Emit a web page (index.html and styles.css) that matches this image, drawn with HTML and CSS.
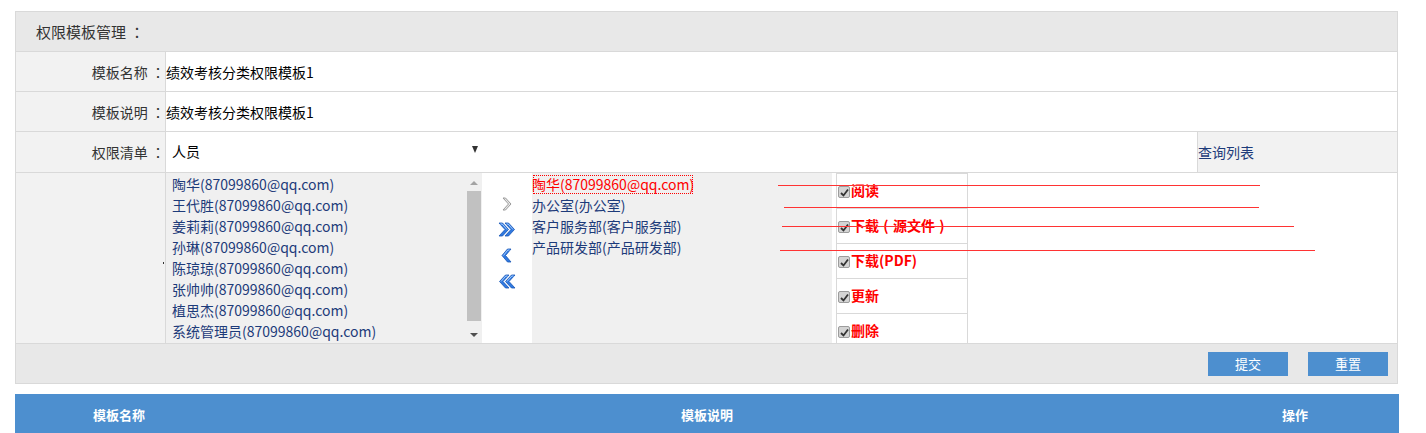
FILE: index.html
```html
<!DOCTYPE html>
<html lang="zh-CN">
<head>
<meta charset="utf-8">
<title>权限模板管理</title>
<link rel="stylesheet" href="styles.css">
</head>
<body>
<div class="page">
  <div class="panel">
    <div class="panel-head">权限模板管理 <span class="punct">：</span></div>
    <div class="row">
      <div class="label">模板名称 <span class="punct">：</span></div>
      <div class="value">绩效考核分类权限模板1</div>
    </div>
    <div class="row">
      <div class="label">模板说明 <span class="punct">：</span></div>
      <div class="value">绩效考核分类权限模板1</div>
    </div>
    <div class="row row-select">
      <div class="label">权限清单 <span class="punct">：</span></div>
      <div class="value select-cell">
        <div class="select"><span>人员</span><i class="caret"></i></div>
      </div>
      <div class="query">查询列表</div>
    </div>
    <div class="row row-lists">
      <div class="label label-dot"><span class="dot"></span></div>
      <div class="lists">
        <div class="listbox">
          <ul class="items">
            <li>陶华(87099860@qq.com)</li>
            <li>王代胜(87099860@qq.com)</li>
            <li>姜莉莉(87099860@qq.com)</li>
            <li>孙琳(87099860@qq.com)</li>
            <li>陈琼琼(87099860@qq.com)</li>
            <li>张帅帅(87099860@qq.com)</li>
            <li>植思杰(87099860@qq.com)</li>
            <li>系统管理员(87099860@qq.com)</li>
          </ul>
          <div class="scrollbar">
            <i class="sb-up"></i>
            <div class="sb-thumb"></div>
            <i class="sb-down"></i>
          </div>
        </div>
        <div class="movers">
          <svg class="mv" width="12" height="14" viewBox="0 0 12 14"><path d="M2 1 L4.5 1 L10 7 L4.5 13 L2 13 L7.5 7 Z" fill="#e6e6e6" stroke="#9a9a9a" stroke-width="1"/></svg>
          <svg class="mv" width="18" height="15" viewBox="0 0 18 15"><path d="M1 1 L4.5 1 L10.5 7.5 L4.5 14 L1 14 L7 7.5 Z" fill="#2f79e0" stroke="#1b57b5" stroke-width="0.8"/><path d="M7 1 L10.5 1 L16.5 7.5 L10.5 14 L7 14 L13 7.5 Z" fill="#2f79e0" stroke="#1b57b5" stroke-width="0.8"/><path d="M2.5 2 L4.2 2 L9 7.5" fill="none" stroke="#9cc8ff" stroke-width="1"/><path d="M8.5 2 L10.2 2 L15 7.5" fill="none" stroke="#9cc8ff" stroke-width="1"/></svg>
          <svg class="mv" width="12" height="15" viewBox="0 0 12 15"><path d="M10 1 L6.5 1 L1 7.5 L6.5 14 L10 14 L4.5 7.5 Z" fill="#2f79e0" stroke="#1b57b5" stroke-width="0.8"/><path d="M8.5 2 L6.8 2 L2.5 7.5" fill="none" stroke="#9cc8ff" stroke-width="1"/></svg>
          <svg class="mv" width="18" height="15" viewBox="0 0 18 15"><path d="M17 1 L13.5 1 L7.5 7.5 L13.5 14 L17 14 L11 7.5 Z" fill="#2f79e0" stroke="#1b57b5" stroke-width="0.8"/><path d="M11 1 L7.5 1 L1.5 7.5 L7.5 14 L11 14 L5 7.5 Z" fill="#2f79e0" stroke="#1b57b5" stroke-width="0.8"/><path d="M15.5 2 L13.8 2 L9 7.5" fill="none" stroke="#9cc8ff" stroke-width="1"/><path d="M9.5 2 L7.8 2 L3 7.5" fill="none" stroke="#9cc8ff" stroke-width="1"/></svg>
        </div>
        <ul class="items chosen">
          <li class="active">陶华(87099860@qq.com)</li>
          <li>办公室(办公室)</li>
          <li>客户服务部(客户服务部)</li>
          <li>产品研发部(产品研发部)</li>
        </ul>
        <div class="perms">
          <div class="perm"><span class="cb"><svg width="9" height="9" viewBox="0 0 9 9"><path d="M1 5 L3.5 7.5 L8 1.5" fill="none" stroke="#333" stroke-width="1.8"/></svg></span>阅读</div>
          <div class="perm"><span class="cb"><svg width="9" height="9" viewBox="0 0 9 9"><path d="M1 5 L3.5 7.5 L8 1.5" fill="none" stroke="#333" stroke-width="1.8"/></svg></span>下载<span class="fw-paren">(</span>源文件<span class="fw-paren">)</span></div>
          <div class="perm"><span class="cb"><svg width="9" height="9" viewBox="0 0 9 9"><path d="M1 5 L3.5 7.5 L8 1.5" fill="none" stroke="#333" stroke-width="1.8"/></svg></span>下载(PDF)</div>
          <div class="perm"><span class="cb"><svg width="9" height="9" viewBox="0 0 9 9"><path d="M1 5 L3.5 7.5 L8 1.5" fill="none" stroke="#333" stroke-width="1.8"/></svg></span>更新</div>
          <div class="perm"><span class="cb"><svg width="9" height="9" viewBox="0 0 9 9"><path d="M1 5 L3.5 7.5 L8 1.5" fill="none" stroke="#333" stroke-width="1.8"/></svg></span>删除</div>
        </div>
      </div>
      <span class="redline l1"></span>
      <span class="redline l2"></span>
      <span class="redline l3"></span>
      <span class="redline l4"></span>
    </div>
    <div class="actions">
      <button class="btn">提交</button>
      <button class="btn">重置</button>
    </div>
  </div>
  <div class="table-head">
    <div>模板名称</div>
    <div>模板说明</div>
    <div>操作</div>
  </div>
</div>
</body>
</html>
```

FILE: styles.css
```css
* { box-sizing: border-box; }
html, body { margin: 0; padding: 0; background: #fff; }
body {
  font-family: "Noto Sans CJK SC", "Microsoft YaHei", sans-serif;
  font-size: 14px;
  color: #000;
  overflow: hidden;
}
.punct { font-family: "Noto Sans CJK TC", "Noto Sans CJK SC", sans-serif; }
.fw-paren {
  display: inline-block;
  width: 14px;
  text-align: center;
}
.page { margin: 11px 28px 0 15px; }
.panel { border: 1px solid #d9d9d9; }
.panel-head {
  height: 40px;
  background: #e8e8e8;
  border-bottom: 1px solid #d9d9d9;
  padding-left: 20px;
  font-size: 15px;
  color: #333;
  display: flex;
  align-items: center;
  white-space: pre;
}
.row {
  display: flex;
  height: 40px;
  border-bottom: 1px solid #d9d9d9;
}
.row-select { height: 41px; }
.label {
  width: 150px;
  flex: none;
  background: #f2f2f2;
  border-right: 1px solid #d9d9d9;
  color: #333;
  display: flex;
  align-items: center;
  justify-content: flex-end;
  padding-right: 0;
  white-space: pre;
}
.value {
  flex: 1;
  display: flex;
  align-items: center;
  line-height: 20px;
}
.select {
  width: 318px;
  display: flex;
  align-items: center;
  justify-content: space-between;
  padding: 0 6px 0 6px;
  height: 24px;
  margin-top: -2px;
}
.caret {
  width: 0; height: 0;
  border-left: 3.5px solid transparent;
  border-right: 3.5px solid transparent;
  border-top: 7px solid #333;
  margin-top: -4px;
}
.query {
  width: 200px;
  flex: none;
  background: #f2f2f2;
  border-left: 1px solid #d9d9d9;
  color: #1d3b7a;
  display: flex;
  align-items: center;
}
.row-lists {
  height: 171px;
  position: relative;
  overflow: hidden;
}
.label-dot { align-items: center; padding-right: 1px; }
.dot { width: 1px; height: 2px; background: #333; margin-top: 10px; }
.lists { flex: 1; display: flex; align-items: stretch; }
.listbox {
  width: 316px;
  flex: none;
  background: #f0f0f0;
  display: flex;
  justify-content: space-between;
}
.items {
  list-style: none;
  margin: 0;
  padding: 1px 0 0 6px;
  color: #1d3b7a;
  line-height: 21px;
  white-space: nowrap;
}
.scrollbar {
  width: 15px;
  display: flex;
  flex-direction: column;
  align-items: center;
  margin-right: 1px;
}
.sb-up, .sb-down {
  display: block;
  width: 0; height: 0;
  border-left: 4px solid transparent;
  border-right: 4px solid transparent;
  margin: 8px 0 6px;
}
.sb-up { border-bottom: 4px solid #a3a3a3; }
.sb-down { border-top: 4px solid #505050; margin: 6px 0 6px; }
.sb-thumb { width: 14px; flex: 1; background: #c1c1c1; margin-bottom: 6px; }
.movers {
  width: 50px;
  flex: none;
  background: #fff;
  display: flex;
  flex-direction: column;
  align-items: center;
  padding-top: 24px;
  gap: 11px;
}
.mv { display: block; }
.chosen {
  width: 300px;
  flex: none;
  background: #f0f0f0;
  padding: 1px 0 0 0;
}
.chosen li { width: max-content; }
.chosen .active {
  color: #f00;
  outline: 1px dotted #f00;
  outline-offset: -2px;
}
.perms {
  margin-left: 4px;
  width: 132px;
  flex: none;
  border: 1px solid #d9d9d9;
  border-bottom: none;
  align-self: flex-start;
}
.perm {
  height: 35px;
  border-bottom: 1px solid #d9d9d9;
  display: flex;
  align-items: center;
  padding-left: 1px;
  padding-bottom: 2px;
  color: #f00;
  font-weight: bold;
  font-size: 14px;
  white-space: nowrap;
}
.cb {
  width: 12px; height: 12px;
  background: #d4d4d4;
  border: 1px solid #9c9c9c;
  border-radius: 2px;
  display: flex;
  align-items: center;
  justify-content: center;
  margin-right: 1px;
  margin-top: 4px;
  flex: none;
}
.cb svg { display: block; }
.redline {
  position: absolute;
  height: 1px;
  background: #f33;
}
.l1 { top: 12px; left: 762px; width: 482px; }
.l2 { top: 34px; left: 768px; width: 475px; }
.l3 { top: 53px; left: 766px; width: 512px; }
.l4 { top: 77px; left: 764px; width: 535px; }
.actions {
  height: 39px;
  background: #e8e8e8;
  display: flex;
  justify-content: flex-end;
  align-items: center;
  gap: 20px;
  padding-right: 9px;
}
.btn {
  width: 80px;
  height: 24px;
  border: none;
  background: #4d8fcf;
  color: #fff;
  font-family: inherit;
  font-size: 13px;
  padding: 0;
  cursor: pointer;
}
.table-head {
  margin-top: 10px;
  height: 40px;
  background: #4d8fcf;
  color: #fff;
  font-weight: bold;
  font-size: 13px;
  display: grid;
  grid-template-columns: 208px 1fr 208px;
  align-items: center;
  text-align: center;
  width: 1384px;
}
```
